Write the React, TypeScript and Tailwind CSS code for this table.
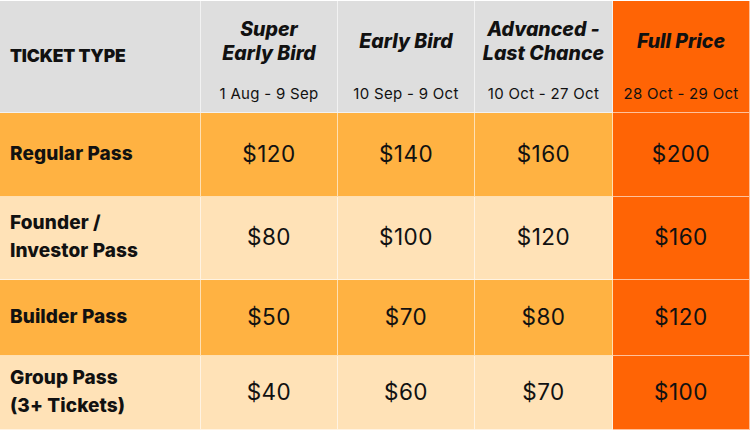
const PHASES = [
  { title: ["Super", "Early Bird"], dates: "1 Aug - 9 Sep" },
  { title: ["Early Bird"], dates: "10 Sep - 9 Oct" },
  { title: ["Advanced -", "Last Chance"], dates: "10 Oct - 27 Oct" },
  { title: ["Full Price"], dates: "28 Oct - 29 Oct" },
];

const ROWS = [
  { label: ["Regular Pass"], prices: ["$120", "$140", "$160", "$200"], dark: true, h: "h-[84px]" },
  { label: ["Founder /", "Investor Pass"], prices: ["$80", "$100", "$120", "$160"], dark: false, h: "h-[83px]" },
  { label: ["Builder Pass"], prices: ["$50", "$70", "$80", "$120"], dark: true, h: "h-[76px]" },
  { label: ["Group Pass", "(3+ Tickets)"], prices: ["$40", "$60", "$70", "$100"], dark: false, h: "h-[74px]" },
];

const cell = "border-r-[1.5px] border-b-[1.5px] border-white/60";

export default function App() {
  return (
    <div className="w-[750px] h-[430px] overflow-hidden bg-white font-['Inter',sans-serif] text-[#111]">
      <div className="grid grid-cols-[201px_137px_137px_138px_137px] border-t border-white/60">
        {/* header */}
        <div className={`${cell} h-[112px] bg-[#dedede] flex items-center pl-[10px]`}>
          <span className="text-[17.5px] font-black tracking-[-0.01em]">TICKET TYPE</span>
        </div>
        {PHASES.map((p, i) => (
          <div
            key={i}
            className={`${cell} h-[112px] flex flex-col items-center ${
              i === 3 ? "bg-[#ff6405]" : "bg-[#dedede]"
            }`}
          >
            <div className="h-[76px] flex flex-col items-center justify-center pt-[3px]">
              {p.title.map((t) => (
                <span key={t} className="text-[19.5px] leading-[24px] font-extrabold italic whitespace-nowrap">
                  {t}
                </span>
              ))}
            </div>
            <span className="text-[15px] leading-[20px] mt-[7px] tracking-[0.02em] whitespace-nowrap">
              {p.dates}
            </span>
          </div>
        ))}

        {/* body */}
        {ROWS.map((r, ri) => (
          <div key={ri} className="contents">
            <div
              className={`${cell} ${r.h} flex flex-col justify-center pl-[10px] pb-[2px] ${
                r.dark ? "bg-[#ffb242]" : "bg-[#ffe2b7]"
              }`}
            >
              {r.label.map((l) => (
                <span key={l} className="text-[19px] leading-[28px] font-extrabold tracking-[0.005em]">
                  {l}
                </span>
              ))}
            </div>
            {r.prices.map((price, pi) => (
              <div
                key={pi}
                className={`${cell} ${r.h} flex items-center justify-center pb-[2px] text-[22.5px] tracking-[0.02em] ${
                  pi === 3 ? "bg-[#ff6405]" : r.dark ? "bg-[#ffb242]" : "bg-[#ffe2b7]"
                }`}
              >
                {price}
              </div>
            ))}
          </div>
        ))}
      </div>
    </div>
  );
}
